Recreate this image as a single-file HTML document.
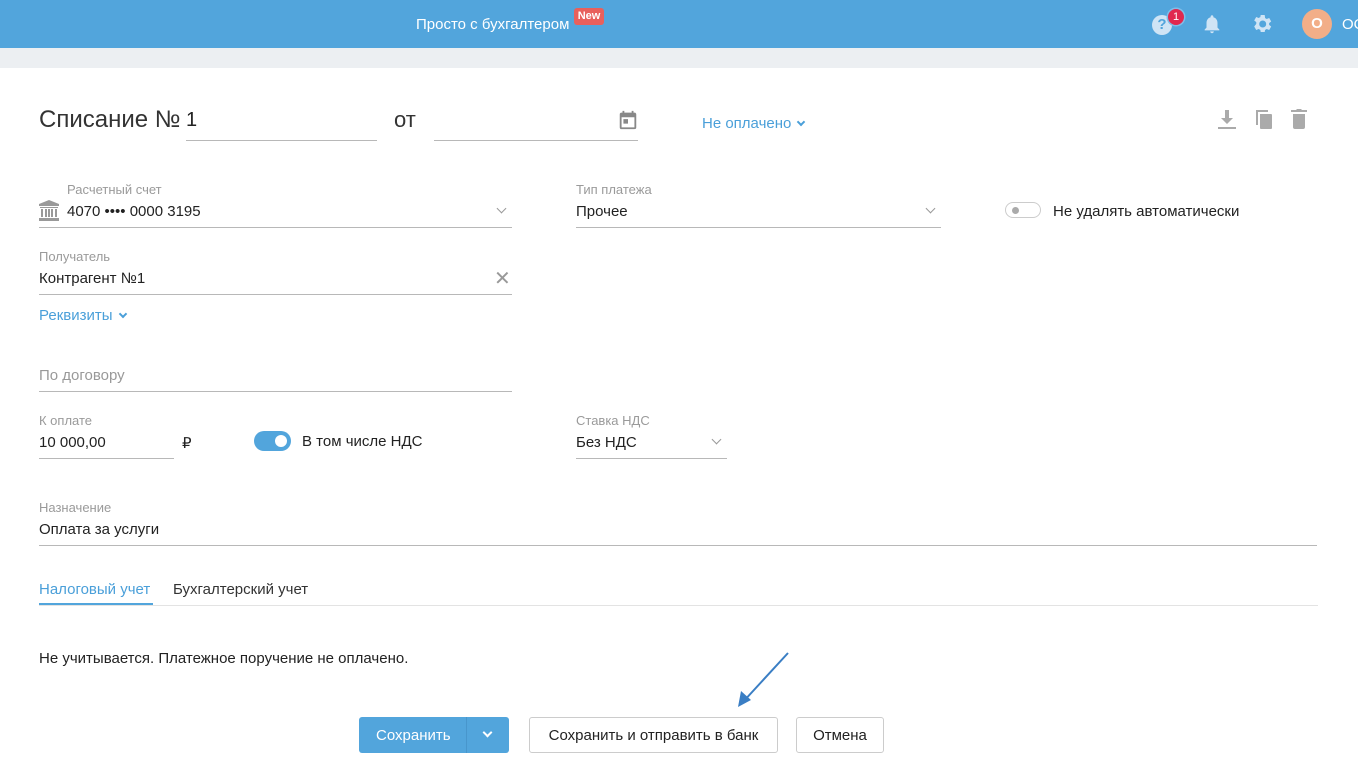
<!DOCTYPE html>
<html><head><meta charset="utf-8"><style>
*{box-sizing:border-box;margin:0;padding:0}
body{width:1358px;height:766px;overflow:hidden;background:#fff;font-family:"Liberation Sans",sans-serif;color:#333;position:relative}
.a{position:absolute}
.lbl{position:absolute;font-size:13px;color:#9a9a9a}
.val{position:absolute;font-size:15px;color:#222}
.ln{position:absolute;height:1px;background:#b8b8b8}
.chev{position:absolute;width:7px;height:7px;border-right:1.5px solid #999;border-bottom:1.5px solid #999;transform:rotate(45deg)}
.bchev{display:inline-block;width:6px;height:6px;border-right:2px solid #4a9fd9;border-bottom:2px solid #4a9fd9;transform:rotate(45deg);margin-left:7px;position:relative;top:-3px}
.btn{position:absolute;top:717px;height:36px;border:1px solid #ccc;border-radius:3px;background:#fff;font-size:15px;color:#222;text-align:center;line-height:35px}
</style></head><body>
<div class="a" style="left:0;top:0;width:1358px;height:48px;background:#52a5dc"></div>
<div class="a" style="left:0;top:48px;width:1358px;height:20px;background:#eceff2"></div>
<div class="a" style="left:416px;top:16px;font-size:15px;color:#fff">Просто с бухгалтером</div>
<div class="a" style="left:574px;top:8px;width:30px;height:17px;background:#e8605c;border-radius:3px;color:#fff;font-size:11px;font-weight:bold;text-align:center;line-height:17px">New</div>
<div class="a" style="left:1152px;top:15px;width:20px;height:20px;border-radius:50%;background:#cfe4f5;color:#52a5dc;font-weight:bold;font-size:15px;text-align:center;line-height:20px">?</div>
<div class="a" style="left:1168px;top:9px;width:16px;height:16px;border-radius:50%;background:#e0284f;color:#fff;font-size:11px;text-align:center;line-height:16px;box-shadow:0 0 0 1.5px #7fbde8">1</div>
<svg class="a" style="left:1201px;top:12px" width="22" height="24" viewBox="0 0 24 24"><path fill="#cfe4f5" d="M12 22c1.1 0 2-.9 2-2h-4c0 1.1.9 2 2 2zm6-6v-5c0-3.1-1.600-5.6-4.5-6.3V4c0-.8-.7-1.5-1.5-1.5s-1.5.7-1.5 1.5v.7C7.6 5.4 6 7.9 6 11v5l-2 2v1h16v-1l-2-2z"/></svg>
<svg class="a" style="left:1250px;top:12px" width="24" height="24" viewBox="0 0 24 24"><path fill="#cfe4f5" d="M19.1 12.9a7 7 0 0 0 0-1.8l2.1-1.6-2-3.5-2.5 1a7 7 0 0 0-1.6-.9L14.7 3h-4l-.4 2.1c-.6.2-1.1.5-1.6.9l-2.5-1-2 3.5 2.1 1.6a7 7 0 0 0 0 1.8L4.2 14.5l2 3.5 2.5-1c.5.4 1 .7 1.6.9l.4 2.1h4l.4-2.1c.6-.2 1.1-.5 1.6-.9l2.5 1 2-3.5-2.1-1.6zM12.7 15.5a3.5 3.5 0 1 1 0-7 3.5 3.5 0 0 1 0 7z"/></svg>
<div class="a" style="left:1302px;top:9px;width:30px;height:30px;border-radius:50%;background:#f2ae88;color:#fff;font-weight:bold;font-size:15px;text-align:center;line-height:30px">О</div>
<div class="a" style="left:1342px;top:16px;font-size:15px;color:#fff">ОО</div>

<div class="a" style="left:39px;top:106px;font-size:24px;color:#333">Списание №</div>
<div class="a" style="left:186px;top:109px;font-size:20px;color:#222">1</div>
<div class="ln" style="left:186px;top:140px;width:191px"></div>
<div class="a" style="left:394px;top:107px;font-size:22px;color:#333">от</div>
<div class="ln" style="left:434px;top:140px;width:204px"></div>
<svg class="a" style="left:617px;top:109px" width="22" height="22" viewBox="0 0 24 24"><path fill="#888" d="M19 4h-1V2h-2v2H8V2H6v2H5a2 2 0 0 0-2 2v14a2 2 0 0 0 2 2h14a2 2 0 0 0 2-2V6a2 2 0 0 0-2-2zm0 16H5V9h14v11zM7 11h5v5H7z"/></svg>
<div class="a" style="left:702px;top:115px;font-size:15px;color:#4a9fd9">Не оплачено<span class="bchev"></span></div>
<svg class="a" style="left:1215px;top:107px" width="24" height="24" viewBox="0 0 24 24"><path fill="#aaa" d="M10 3h4v8h4l-6 6-6-6h4zM3 20h18v2H3z"/></svg>
<svg class="a" style="left:1252px;top:107px" width="24" height="24" viewBox="0 0 24 24"><path fill="#aaa" d="M4 3h12v2H6v13H4zM8 7h11a1 1 0 0 1 1 1v13a1 1 0 0 1-1 1H9a1 1 0 0 1-1-1z"/></svg>
<svg class="a" style="left:1287px;top:107px" width="24" height="24" viewBox="0 0 24 24"><path fill="#aaa" d="M6 7h12v13a2 2 0 0 1-2 2H8a2 2 0 0 1-2-2zM4 3h5l1-1h4l1 1h5v2H4z"/></svg>

<div class="lbl" style="left:67px;top:182px">Расчетный счет</div>
<svg class="a" style="left:38px;top:200px" width="22" height="21" viewBox="0 0 22 21"><path fill="#999" d="M11 0l10 4v2H1V4zM2 7h18v1H2zM3 9h2v8H3zM7 9h2v8H7zM13 9h2v8h-2zM17 9h2v8h-2zM10 9h2v8h-2zM1 18h20v3H1z"/></svg>
<div class="val" style="left:67px;top:203px">4070 •••• 0000 3195</div>
<div class="chev" style="left:498px;top:205px"></div>
<div class="ln" style="left:39px;top:227px;width:473px"></div>

<div class="lbl" style="left:576px;top:182px">Тип платежа</div>
<div class="val" style="left:576px;top:203px">Прочее</div>
<div class="chev" style="left:927px;top:205px"></div>
<div class="ln" style="left:576px;top:227px;width:365px"></div>

<div class="a" style="left:1005px;top:202px;width:36px;height:16px;border-radius:8px;background:#fff;border:1px solid #ccc"></div>
<div class="a" style="left:1012px;top:207px;width:7px;height:7px;border-radius:50%;background:#aaa"></div>
<div class="val" style="left:1053px;top:203px">Не удалять автоматически</div>

<div class="lbl" style="left:39px;top:249px">Получатель</div>
<div class="val" style="left:39px;top:270px">Контрагент №1</div>
<div class="a" style="left:494px;top:266px;font-size:20px;color:#999">✕</div>
<div class="ln" style="left:39px;top:294px;width:473px"></div>
<div class="a" style="left:39px;top:307px;font-size:15px;color:#4a9fd9">Реквизиты<span class="bchev"></span></div>

<div class="a" style="left:39px;top:367px;font-size:15px;color:#999">По договору</div>
<div class="ln" style="left:39px;top:391px;width:473px"></div>

<div class="lbl" style="left:39px;top:413px">К оплате</div>
<div class="val" style="left:39px;top:434px">10 000,00</div>
<div class="ln" style="left:39px;top:458px;width:135px"></div>
<div class="val" style="left:182px;top:434px">₽</div>
<div class="a" style="left:254px;top:431px;width:37px;height:20px;border-radius:10px;background:#52a5dc"></div>
<div class="a" style="left:275px;top:435px;width:12px;height:12px;border-radius:50%;background:#fff"></div>
<div class="val" style="left:302px;top:433px">В том числе НДС</div>

<div class="lbl" style="left:576px;top:413px">Ставка НДС</div>
<div class="val" style="left:576px;top:434px">Без НДС</div>
<div class="chev" style="left:713px;top:436px"></div>
<div class="ln" style="left:576px;top:458px;width:151px"></div>

<div class="lbl" style="left:39px;top:500px">Назначение</div>
<div class="val" style="left:39px;top:521px">Оплата за услуги</div>
<div class="ln" style="left:39px;top:545px;width:1278px"></div>

<div class="a" style="left:39px;top:581px;font-size:15px;color:#4a9fd9">Налоговый учет</div>
<div class="a" style="left:39px;top:603px;width:114px;height:2px;background:#52a5dc"></div>
<div class="a" style="left:173px;top:581px;font-size:15px;color:#333">Бухгалтерский учет</div>
<div class="a" style="left:39px;top:605px;width:1279px;height:1px;background:#e3e3e3"></div>

<div class="a" style="left:39px;top:650px;font-size:15px;color:#222">Не учитывается. Платежное поручение не оплачено.</div>

<div class="a" style="left:359px;top:717px;width:150px;height:36px;border-radius:3px;background:#52a5dc"></div>
<div class="a" style="left:376px;top:727px;font-size:15px;color:#fff">Сохранить</div>
<div class="a" style="left:466px;top:717px;width:1px;height:36px;background:#4896cc"></div>
<div class="a" style="left:484px;top:729px;width:7px;height:7px;border-right:2px solid #fff;border-bottom:2px solid #fff;transform:rotate(45deg)"></div>
<div class="btn" style="left:529px;width:249px">Сохранить и отправить в банк</div>
<div class="btn" style="left:796px;width:88px">Отмена</div>
<svg class="a" style="left:730px;top:648px" width="64" height="62"><line x1="58" y1="5" x2="12" y2="55" stroke="#3a7ec4" stroke-width="2"/><path d="M8 59l3-16 10 9z" fill="#3a7ec4"/></svg>
</body></html>
